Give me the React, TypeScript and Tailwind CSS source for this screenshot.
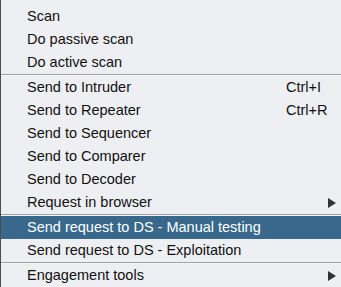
import React from "react";

type Item =
  | { type: "sep" }
  | { type: "item"; label: string; shortcut?: string; arrow?: boolean; active?: boolean };

const items: Item[] = [
  { type: "item", label: "Scan" },
  { type: "item", label: "Do passive scan" },
  { type: "item", label: "Do active scan" },
  { type: "sep" },
  { type: "item", label: "Send to Intruder", shortcut: "Ctrl+I" },
  { type: "item", label: "Send to Repeater", shortcut: "Ctrl+R" },
  { type: "item", label: "Send to Sequencer" },
  { type: "item", label: "Send to Comparer" },
  { type: "item", label: "Send to Decoder" },
  { type: "item", label: "Request in browser", arrow: true },
  { type: "sep" },
  { type: "item", label: "Send request to DS - Manual testing", active: true },
  { type: "item", label: "Send request to DS - Exploitation" },
  { type: "sep" },
  { type: "item", label: "Engagement tools", arrow: true },
];

export default function App() {
  return (
    <div
      className="w-[341px] h-[287px] overflow-hidden bg-[#eeeff3] border-l border-[#4d4d4d] pt-[5px] flex flex-col"
      style={{ fontFamily: '"Liberation Sans", Arial, sans-serif' }}
    >
      {items.map((it, i) =>
        it.type === "sep" ? (
          <div key={i} className="h-[2px] shrink-0 flex flex-col">
            <div className="h-px bg-[#a3a3a6]" />
            <div className="h-px bg-[#f4f5f8]" />
          </div>
        ) : (
          <div
            key={i}
            className={`h-[23px] shrink-0 flex items-center text-[14.5px] leading-none ${
              it.active ? "bg-[#38698c] text-white" : "text-[#111111]"
            }`}
          >
            <span className="pl-[26px] w-[285px] whitespace-nowrap">{it.label}</span>
            {it.shortcut && <span className="whitespace-nowrap">{it.shortcut}</span>}
            {it.arrow && (
              <svg className="ml-[42px]" width="8" height="10" viewBox="0 0 8 10">
                <path d="M0 0 L8 5 L0 10 Z" fill="#333333" />
              </svg>
            )}
          </div>
        )
      )}
    </div>
  );
}
